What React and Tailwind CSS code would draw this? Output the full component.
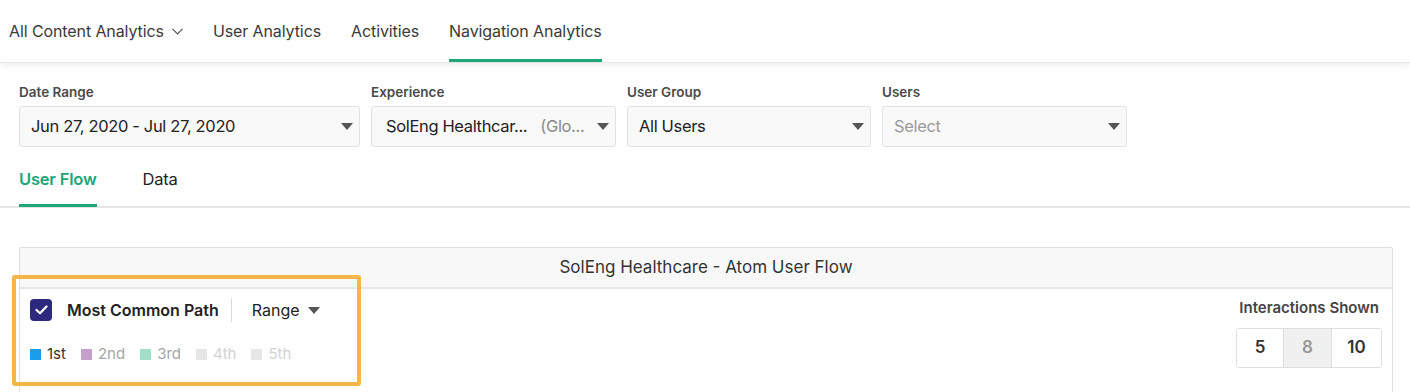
import React from "react";

const Caret = ({ className = "" }) => (
  <svg width="12" height="7" viewBox="0 0 12 7" className={className}>
    <path d="M0 0 L12 0 L6 7 Z" fill="#555" />
  </svg>
);

const Select = ({ width, children, padLeft = "pl-[11px]" }) => (
  <div
    className={`h-[41px] ${width} ${padLeft} pr-[6px] flex items-center justify-between bg-[#f9f9f9] border border-[#e2e2e2] rounded-[3px]`}
  >
    <div className="flex items-center text-[16.5px] tracking-[-0.35px] text-[#222] min-w-0 whitespace-nowrap">{children}</div>
    <Caret />
  </div>
);

const Field = ({ label, children }) => (
  <div className="flex flex-col">
    <div className="text-[13.5px] font-semibold text-[#4a4a4a] leading-[16px] mb-[6px]">{label}</div>
    {children}
  </div>
);

const Legend = ({ color, label, textColor }) => (
  <div className="flex items-center gap-[6px]">
    <span className={`w-[11px] h-[11px] ${color}`}></span>
    <span className={`text-[15px] ${textColor}`}>{label}</span>
  </div>
);

export default function App() {
  return (
    <div className="bg-white min-h-[392px] overflow-hidden" style={{ fontFamily: "Inter, 'Noto Sans', sans-serif" }}>
      {/* Top nav */}
      <div className="h-[63px] flex items-stretch pl-[9px] gap-[30px] border-b border-[#e6e6e6] shadow-[0_3px_6px_rgba(0,0,0,0.06)] text-[16px] tracking-[-0.1px] text-[#3a3a3a]">
        <div className="flex items-center gap-[8px]">
          <span>All Content Analytics</span>
          <svg width="11" height="7" viewBox="0 0 11 7">
            <path d="M0.5 0.8 L5.5 5.8 L10.5 0.8" fill="none" stroke="#555" strokeWidth="1.2" />
          </svg>
        </div>
        <div className="flex items-center">User Analytics</div>
        <div className="flex items-center">Activities</div>
        <div className="flex items-center border-b-[3px] border-[#21a67a] pt-[3px]">Navigation Analytics</div>
      </div>

      {/* Filters */}
      <div className="pl-[19px] pt-[21px] flex gap-[11px]">
        <Field label="Date Range">
          <Select width="w-[341px]">Jun 27, 2020 - Jul 27, 2020</Select>
        </Field>
        <Field label="Experience">
          <Select width="w-[245px]" padLeft="pl-[14px]">
            <span>SolEng Healthcar...</span>
            <span className="ml-[13px] text-[#8a8a8a]">(Glo...</span>
          </Select>
        </Field>
        <Field label="User Group">
          <Select width="w-[244px]">All Users</Select>
        </Field>
        <Field label="Users">
          <Select width="w-[245px]">
            <span className="text-[#9a9a9a]">Select</span>
          </Select>
        </Field>
      </div>

      {/* Sub tabs */}
      <div className="mt-[13px] pl-[19px] flex gap-[46px] border-b-2 border-[#e6e6e6] h-[48px]">
        <div className="flex items-center h-[47px] border-b-[3px] border-[#21a67a] text-[16.5px] tracking-[-0.2px] font-semibold text-[#21a67a] pb-[5px]">
          User Flow
        </div>
        <div className="flex items-center h-[47px] border-b-[3px] border-transparent pb-[5px] text-[16.5px] tracking-[-0.2px] text-[#222]">Data</div>
      </div>

      {/* Card */}
      <div className="relative ml-[19px] mr-[17px] mt-[39px] border border-[#e0e0e0] rounded-t-[2px]">
        <div className="h-[41px] bg-[#f8f8f8] border-b-2 border-[#e6e6e6] flex items-center justify-center text-[17px] text-[#333]">
          SolEng Healthcare - Atom User Flow
        </div>
        <div className="flex justify-between pl-[10px] pr-[10px] pt-[10px] h-[120px]">
          <div className="flex flex-col">
            <div className="flex items-center h-[22px]">
              <div className="w-[22px] h-[22px] rounded-[4px] bg-[#2d2a7e] flex items-center justify-center">
                <svg width="13" height="10" viewBox="0 0 13 10">
                  <path d="M1.5 5 L5 8.3 L11.5 1.5" fill="none" stroke="white" strokeWidth="2.2" strokeLinecap="round" strokeLinejoin="round" />
                </svg>
              </div>
              <span className="ml-[15px] text-[16px] font-semibold text-[#222]">Most Common Path</span>
              <span className="ml-[12px] w-px h-[24px] bg-[#dcdcdc]"></span>
              <span className="ml-[20px] text-[16px] text-[#222]">Range</span>
              <Caret className="ml-[8px]" />
            </div>
            <div className="flex items-center gap-[15px] mt-[22px]">
              <Legend color="bg-[#1b9de7]" label="1st" textColor="text-[#333]" />
              <Legend color="bg-[#c39fc9]" label="2nd" textColor="text-[#a6a6a6]" />
              <Legend color="bg-[#9fe0c6]" label="3rd" textColor="text-[#a6a6a6]" />
              <Legend color="bg-[#e6e6e6]" label="4th" textColor="text-[#d2d2d2]" />
              <Legend color="bg-[#e6e6e6]" label="5th" textColor="text-[#d2d2d2]" />
            </div>
          </div>
          <div className="flex flex-col items-end">
            <div className="text-[15px] font-semibold text-[#444] leading-[18px] mr-[3px]">Interactions Shown</div>
            <div className="mt-[11px] flex h-[40px] border border-[#dedede] rounded-[3px] text-[17px] font-semibold">
              <div className="w-[47px] flex items-center justify-center bg-white text-[#333] border-r border-[#dedede]">5</div>
              <div className="w-[48px] flex items-center justify-center bg-[#f0f0f0] text-[#999] border-r border-[#dedede]">8</div>
              <div className="w-[49px] flex items-center justify-center bg-white text-[#333]">10</div>
            </div>
          </div>
        </div>
        {/* Highlight annotation */}
        <div className="absolute left-[-8px] top-[27px] w-[349px] h-[111px] border-4 border-[#f5b548] rounded-[3px] pointer-events-none"></div>
      </div>
    </div>
  );
}
